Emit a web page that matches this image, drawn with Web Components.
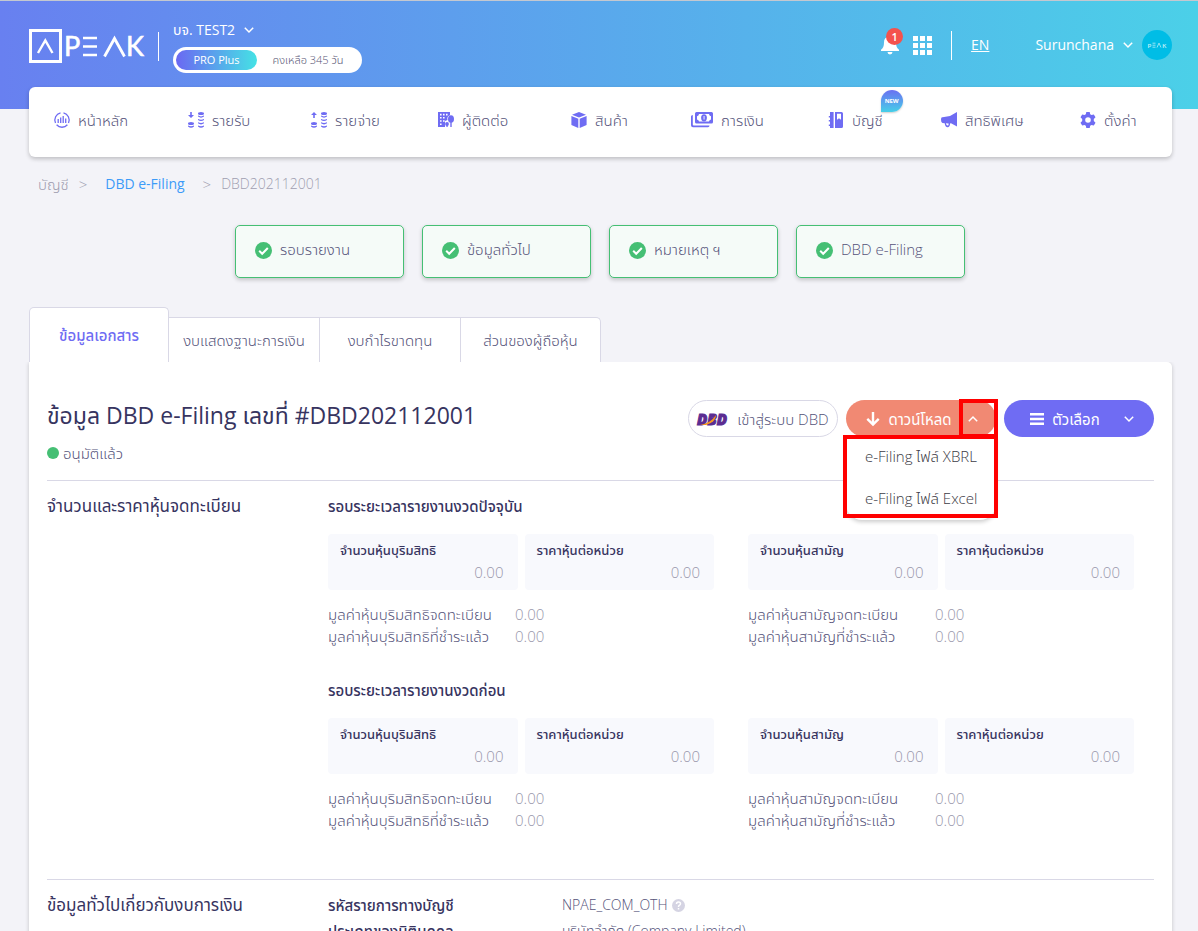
<!DOCTYPE html>
<html lang="th">
<head>
<meta charset="utf-8">
<meta name="viewport" content="width=device-width, initial-scale=1">
<title>PEAK - DBD e-Filing</title>
<style>
  :root {
    --primary: #6f6cf3;
    --text: #55537a;
    --heading: #37345f;
    --muted: #9897ab;
    --line: #d9d8e6;
    --green: #45bf74;
    --red: #ff0000;
  }

  body {
    margin: 0;
    background: #f3f3f8;
    color: var(--text);
    font: 300 15px/22px "Open Sans", "Noto Sans Thai", "Noto Sans", sans-serif;
  }
</style>
</head>
<body>
<peak-page></peak-page>

<script>
/** Inline icons by name: [viewBox, markup]. */
const icons = {
  home: ['0 0 16 16', '<g fill="none" stroke="currentColor" stroke-width="1.3"><path d="M6.5.9a7.2 7.2 0 0 0-5 10M9.5.9a7.2 7.2 0 0 1 5 10M2.6 12.8a7.2 7.2 0 0 0 10.8 0"/><path d="M4.2 7v4M6.7 5.5V11M9.2 4v7M11.7 6.5V11"/></g>'],
  income: ['0 0 16 16', '<path d="M2.2 0h1.6v3H6L3 6 0 3h2.2z"/><g><ellipse cx="3" cy="11.5" rx="3" ry="1.5"/><path d="M0 13.5q3 1.5 6 0v1q-3 2.5-6 0z"/><ellipse cx="13" cy="1.5" rx="3" ry="1.5"/><path d="M10 3.6q3 1.6 6 0v1q-3 2.2-6 0zM10 7q3 1.6 6 0v1q-3 2.2-6 0zM10 10.3q3 1.6 6 0v1q-3 2.2-6 0zM10 13.5q3 1.6 6 0v1q-3 2.5-6 0z"/></g>'],
  expense: ['0 0 16 16', '<path d="M2.2 6h1.6V3H6L3 0 0 3h2.2z"/><g><ellipse cx="3" cy="11.5" rx="3" ry="1.5"/><path d="M0 13.5q3 1.5 6 0v1q-3 2.5-6 0z"/><ellipse cx="13" cy="1.5" rx="3" ry="1.5"/><path d="M10 3.6q3 1.6 6 0v1q-3 2.2-6 0zM10 7q3 1.6 6 0v1q-3 2.2-6 0zM10 10.3q3 1.6 6 0v1q-3 2.2-6 0zM10 13.5q3 1.6 6 0v1q-3 2.5-6 0z"/></g>'],
  contact: ['0 0 16 16', '<path fill-rule="evenodd" d="M0 0h12v3.2A4 4 0 0 0 9.5 8L7 9v6H0zM2 1.8v1.6h1.6V1.8zm3 0v1.6h1.6V1.8zm3 0v1.6h1.6V1.8zM2 5v1.6h1.6V5zm3 0v1.6h1.6V5zM2 8.2v1.6h1.6V8.2zm3 0v1.6h1.6V8.2zM2 11.4V13h1.6v-1.6z"/><ellipse cx="13" cy="7" rx="3" ry="3.8"/><path d="M12.3 9h1.4v6h-1.4z"/><circle cx="9" cy="12" r="1.9"/><path d="M8.4 12h1.3v3H8.4z"/>'],
  product: ['0 0 16 16', '<path d="M8 0l7 2.8L8 5.6 1 2.8zM.4 4.1l6.9 2.7V16L.4 13zM15.6 4.1L8.7 6.8V16l6.9-3z"/>'],
  finance: ['0 0 22 16', '<path fill-rule="evenodd" d="M5.500 0h15A1.500 1.500 0 0 1 22 1.500v8.500a1.500 1.500 0 0 1-1.500 1.500h-15A1.500 1.500 0 0 1 4 10V1.500A1.500 1.500 0 0 1 5.500 0zM8 2a2.500 2.500 0 0 1-2 2.200v3.200A2.500 2.500 0 0 1 8 9.600h10a2.500 2.500 0 0 1 2-2.200V4.200A2.500 2.500 0 0 1 18 2z"/><ellipse cx="13" cy="5.800" rx="2.900" ry="3.600"/><path d="M0 4.500Q0 3 1.800 3v9.500q0 1 1 1H18.500q0 1.800-1.500 1.800H2Q0 15.300 0 13.300z"/><path d="M12.600 4h.900v3.500h-.900z" fill="#fff"/>'],
  accounting: ['0 0 16 16', '<path d="M2 0h3.600v16H2v-2H.8v-1.500H2v-3H.8V8H2V5.500H.8V4H2z"/><path fill-rule="evenodd" d="M7 0h6.500a1.500 1.500 0 0 1 1.500 1.500v13a1.500 1.500 0 0 1-1.500 1.500H7zM9 1.800v6l2-1.600 2 1.600v-6z"/>'],
  privilege: ['0 0 16 16', '<path d="M16 0v14.500l-6-3.200-1 .1c.2 1.300-.4 3.500-2 3.800-1.800.3-3-1.400-3.300-4L1.500 11Q0 10.500 0 7.700T1.500 5.300L9 4zM5 11.300c.3 1.500.9 2.300 1.700 2.200.7-.1 1-1 .9-2.100z"/>'],
  setting: ['0 0 16 16', '<path fill-rule="evenodd" d="M6.300 0h3.400l.5 2.300 1.300.8L13.800 2.400l1.700 2.900-1.700 1.700v2l1.700 1.700-1.700 2.900-2.300-.7-1.300.8L9.700 16H6.300l-.5-2.300-1.300-.8-2.300.7L.5 10.700 2.200 9V7L.5 5.300l1.700-2.900 2.300.7 1.300-.8zM8 5.200a2.800 2.800 0 1 0 0 5.600 2.800 2.800 0 0 0 0-5.600z"/>'],
  bell: ['0 0 18 20', '<path d="M9 0a1.300 1.300 0 0 1 1.300 1.400A6 6 0 0 1 15 7.500c0 4 1 5.500 3 7.300V16H0v-1.200c2-1.800 3-3.300 3-7.300a6 6 0 0 1 4.700-6.100A1.300 1.300 0 0 1 9 0zM6.500 17h5a2.500 2.500 0 0 1-5 0z"/>'],
  apps: ['0 0 19 19', '<path d="M0 0h5v5H0zM7 0h5v5H7zM14 0h5v5h-5zM0 7h5v5H0zM7 7h5v5H7zM14 7h5v5h-5zM0 14h5v5H0zM7 14h5v5H7zM14 14h5v5h-5z"/>'],
  down: ['0 0 10 6', '<path d="M.8.8L5 5 9.200.8" fill="none" stroke="currentColor" stroke-width="1.500"/>'],
  up: ['0 0 10 6', '<path d="M.8 5.200L5 1l4.200 4.200" fill="none" stroke="currentColor" stroke-width="1.500"/>'],
  arrow: ['0 0 14 14', '<path d="M7 0v12M1.300 6.800L7 12.500l5.700-5.700" fill="none" stroke="currentColor" stroke-width="2.400"/>'],
  menu: ['0 0 14 12', '<path d="M0 0h14v2.400H0zM0 4.800h14v2.400H0zM0 9.600h14V12H0z"/>'],
  check: ['0 0 17 17', '<circle cx="8.500" cy="8.500" r="8.500"/><path d="M4.200 8.800l3 3 5.600-5.800" fill="none" stroke="#fff" stroke-width="2"/>'],
  help: ['0 0 13 13', '<circle cx="6.500" cy="6.500" r="6.500"/><path d="M4.500 5q0-2 2-2t2 1.800q0 1-1.200 1.600-.8.400-.8 1.500M6.500 9v1.500" fill="none" stroke="#fff" stroke-width="1.500"/>'],
  logo: ['0 0 116 34', '<g fill="none" stroke="currentColor"><path d="M1.500 1.500h30v31h-30z" stroke-width="3"/><path d="M9 24l7.300-12.500L23.500 24" stroke-width="2.400"/><path d="M54 9h14M54 17.500h14M54 26h14" stroke-width="2.600"/><path d="M75.500 27.500L85.500 9.500l10 18" stroke-width="2.800"/></g><g font-family="Lato" font-weight="400" font-size="27" stroke="currentColor" stroke-width=".6"><text x="35" y="27">P</text><text x="97" y="27">K</text></g>'],
  avatar: ['0 0 30 30', '<circle cx="15" cy="15" r="15" fill="#00bde6"/><g fill="none" stroke="#b9edf8" stroke-width=".8"><path d="M10.500 13.200h3M10.500 15.200h3M10.500 17.200h3M15 17.500l2-4.400 2 4.400"/></g><g font-family="Lato" font-size="6" font-weight="700" fill="#b9edf8"><text x="5.500" y="17.500">P</text><text x="20.200" y="17.500">K</text></g>'],
  dbd: ['0 0 32 16', '<text x="0" y="14" font-family="Open Sans" font-weight="800" font-style="italic" font-size="15" fill="#5b2c91" stroke="#5b2c91">DBD</text><path d="M3 14Q14 12 19 4q0 7-10 10z" fill="#f7981d"/>'],
};

/** Base element that fills an open shadow root with its styles and markup. */
class BaseElement extends HTMLElement {
  connectedCallback() {
    if (this.shadowRoot) { return; }
    this.attachShadow({ mode: 'open' });
    this.shadowRoot.innerHTML = `<style>*, *::before, *::after { box-sizing: border-box; }${this.constructor.styles}</style>${this.render()}`;
  }

  attr(name) {
    return this.getAttribute(name) || '';
  }
}

class PeakIcon extends BaseElement {
  static styles = `
    :host { display: inline-flex; flex: none; width: 16px; height: 16px; }
    svg { width: 100%; height: 100%; fill: currentColor; display: block; overflow: visible; }
  `;

  render() {
    const [viewBox, markup] = icons[this.attr('name')];
    return `<svg viewBox="${viewBox}" aria-hidden="true">${markup}</svg>`;
  }
}

class PeakHeader extends BaseElement {
  static styles = `
    :host {
      display: flex; align-items: flex-start; box-sizing: border-box; height: 109px; padding: 0 26px 0 29px;
      border-top: 1px solid #c4c8d0; color: #fff; font-size: 14px; font-weight: 400;
      background: linear-gradient(90deg, #6880f0, #4bd0e8);
    }
    button { border: 0; padding: 0; background: none; color: inherit; font: inherit; cursor: pointer; display: flex; align-items: center; gap: 9px; }
    a { color: inherit; }
    .logo { width: 116px; height: 34px; margin-top: 28px; }
    .bar { width: 1px; height: 29px; background: #fff; margin: 31px 14px 0 13px; }
    .company { padding-top: 18px; }
    .chevron { width: 10px; height: 6px; }
    .plan { display: flex; align-items: center; width: 189px; height: 26px; margin-top: 6px; padding: 3px; border-radius: 13px; background: #fff; color: #585676; font-size: 11px; line-height: 20px; text-align: center; }
    .plan b { width: 81px; border-radius: 10px; background: linear-gradient(90deg, #6b68f2, #45e2e5); color: #fff; font-weight: 400; }
    .plan span { flex: 1; font-weight: 300; white-space: nowrap; }
    .tools { display: flex; align-items: center; height: 88px; margin-left: auto; }
    .tools .bar { margin: 0 19px; }
    .bell { position: relative; margin-right: 14px; }
    .bell peak-icon { width: 18px; height: 20px; }
    .bell span { position: absolute; left: 5px; top: -7px; width: 17px; height: 17px; border-radius: 9px; background: #f4524d; font-size: 11px; line-height: 17px; font-weight: 600; }
    .apps { width: 19px; height: 19px; }
    .user { margin-left: 46px; gap: 9px; }
    .avatar { width: 30px; height: 30px; }
  `;

  render() {
    return `
      <peak-icon class="logo" name="logo"></peak-icon>
      <div class="bar"></div>
      <div class="company">
        <button>บจ. TEST2 <peak-icon class="chevron" name="down"></peak-icon></button>
        <div class="plan"><b>PRO Plus</b><span>คงเหลือ 345 วัน</span></div>
      </div>
      <div class="tools">
        <button class="bell"><peak-icon name="bell"></peak-icon><span>1</span></button>
        <button aria-label="Apps"><peak-icon class="apps" name="apps"></peak-icon></button>
        <div class="bar"></div>
        <a href="#en">EN</a>
        <button class="user">Surunchana <peak-icon class="chevron" name="down"></peak-icon><peak-icon class="avatar" name="avatar"></peak-icon></button>
      </div>`;
  }
}

class PeakNav extends BaseElement {
  static styles = `
    :host {
      display: grid; grid-template-columns: 134fr 123fr 127fr 133fr 120fr 137fr 113fr 139fr 92fr;
      position: relative; height: 70px; margin: -22px 26px 0 29px; padding-left: 25px;
      border-radius: 6px; background: #fff; box-shadow: 0 2px 4px rgba(0, 0, 0, .22);
    }
  `;

  render() {
    return `
      <peak-nav-item icon="home">หน้าหลัก</peak-nav-item>
      <peak-nav-item icon="income">รายรับ</peak-nav-item>
      <peak-nav-item icon="expense">รายจ่าย</peak-nav-item>
      <peak-nav-item icon="contact">ผู้ติดต่อ</peak-nav-item>
      <peak-nav-item icon="product">สินค้า</peak-nav-item>
      <peak-nav-item icon="finance" wide>การเงิน</peak-nav-item>
      <peak-nav-item icon="accounting" badge="NEW">บัญชี</peak-nav-item>
      <peak-nav-item icon="privilege">สิทธิพิเศษ</peak-nav-item>
      <peak-nav-item icon="setting">ตั้งค่า</peak-nav-item>`;
  }
}

class PeakNavItem extends BaseElement {
  static styles = `
    :host { display: block; padding-top: 22px; }
    a { position: relative; display: inline-flex; align-items: center; gap: 8px; color: inherit; text-decoration: none; white-space: nowrap; }
    peak-icon { color: var(--primary); }
    :host([wide]) peak-icon { width: 22px; }
    .badge { position: absolute; right: -20px; top: -19px; width: 22px; height: 22px; border-radius: 11px 11px 11px 0; background: linear-gradient(#6b70f2, #45cfe8); color: #fff; font-size: 6px; line-height: 22px; font-weight: 700; text-align: center; box-shadow: 0 1px 2px rgba(0, 0, 0, .2); }
  `;

  render() {
    const badge = this.attr('badge');
    return `<a href="#${this.attr('icon')}"><peak-icon name="${this.attr('icon')}"></peak-icon><slot></slot>${badge ? `<span class="badge">${badge}</span>` : ''}</a>`;
  }
}

class PeakBreadcrumb extends BaseElement {
  static styles = `
    :host { display: flex; gap: 10px; padding: 16px 38px 0; color: #9f9eb0; }
    a { color: inherit; text-decoration: none; }
    .link { color: #3c9bf8; font-size: 14px; font-weight: 400; margin: 0 8px; }
    .code { font-size: 14px; }
  `;

  render() {
    return '<a href="#accounting">บัญชี</a><span>&gt;</span><a class="link" href="#dbd">DBD e-Filing</a><span>&gt;</span><span class="code">DBD202112001</span>';
  }
}

class PeakStep extends BaseElement {
  static styles = `
    :host { display: flex; gap: 8px; box-sizing: border-box; width: 169px; height: 53px; padding: 12px 19px; border: 1px solid var(--green); border-radius: 5px; background: #f5fbf8; box-shadow: 0 2px 4px rgba(0, 0, 0, .2); white-space: nowrap; }
    peak-icon { width: 17px; height: 17px; margin-top: 4px; color: var(--green); }
  `;

  render() {
    return '<peak-icon name="check"></peak-icon><slot></slot>';
  }
}

class PeakTabs extends BaseElement {
  static styles = `
    :host { display: flex; align-items: flex-end; margin: 29px 26px 0 29px; }
    button { width: 141px; height: 45px; padding: 0; border: 1px solid var(--line); border-width: 1px 1px 0 0; background: #fff; color: inherit; font: inherit; white-space: nowrap; }
    .wide { width: 151px; }
    .active { width: 140px; height: 55px; border-left-width: 1px; border-radius: 5px 5px 0 0; color: var(--primary); font-weight: 500; }
    button:last-child { width: 140px; border-radius: 0 5px 0 0; }
  `;

  render() {
    return `
      <button class="active">ข้อมูลเอกสาร</button>
      <button class="wide">งบแสดงฐานะการเงิน</button>
      <button>งบกำไรขาดทุน</button>
      <button>ส่วนของผู้ถือหุ้น</button>`;
  }
}

class PeakActions extends BaseElement {
  static styles = `
    :host { display: flex; gap: 8px; }
    button { display: flex; align-items: center; justify-content: center; gap: 8px; border: 0; padding: 0; background: none; color: inherit; font: inherit; font-weight: 400; white-space: nowrap; }
    .pill { width: 150px; height: 37px; border-radius: 19px; color: #fff; }
    .dbd { border: 1px solid var(--line); color: var(--text); font-weight: 300; }
    .dbd peak-icon { width: 32px; }
    .split { position: relative; display: flex; background: #f18973; }
    .main { flex: 1; padding-left: 16px; }
    .main peak-icon, .menu peak-icon { width: 14px; height: 14px; }
    .toggle { width: 40px; padding-right: 6px; }
    .toggle peak-icon, .menu .caret { width: 10px; height: 6px; }
    .toggle::after { content: ""; position: absolute; right: -2px; top: -1px; width: 39px; height: 39px; border: 4px solid var(--red); }
    .menu { padding-left: 6px; background: var(--primary); }
    .menu .caret { margin-left: 16px; }
    .list { position: absolute; left: 0; right: 0; top: 37px; height: 83px; border-radius: 0 0 16px 16px; background: #fff; box-shadow: 0 2px 4px rgba(0, 0, 0, .2); color: #3c3c46; }
    .list::after { content: ""; position: absolute; left: -3px; right: -2px; top: -2px; height: 83px; border: 4px solid var(--red); pointer-events: none; }
    .list a { display: block; padding: 8px 0 12px 19px; color: inherit; font-weight: 300; text-decoration: none; white-space: nowrap; }
  `;

  render() {
    return `
      <button class="pill dbd"><peak-icon name="dbd"></peak-icon>เข้าสู่ระบบ DBD</button>
      <div class="pill split">
        <button class="main"><peak-icon name="arrow"></peak-icon>ดาวน์โหลด</button>
        <button class="toggle" aria-label="เลือกไฟล์"><peak-icon name="up"></peak-icon></button>
        <div class="list"><a href="#xbrl">e-Filing ไฟล์ XBRL</a><a href="#excel">e-Filing ไฟล์ Excel</a></div>
      </div>
      <button class="pill menu"><peak-icon name="menu"></peak-icon>ตัวเลือก<peak-icon class="caret" name="down"></peak-icon></button>`;
  }
}

class PeakField extends BaseElement {
  static styles = `
    :host { display: block; box-sizing: border-box; height: 56px; padding: 5px 14px 0 12px; border-radius: 4px; background: #f8f9fd; }
    label { display: block; color: var(--heading); font-size: 13px; font-weight: 500; white-space: nowrap; }
    input { display: block; width: 100%; height: 22px; border: 0; padding: 0; background: none; color: var(--muted); font: inherit; text-align: right; }
  `;

  render() {
    return `<label for="value">${this.attr('label')}</label><input id="value" value="0.00">`;
  }
}

/** Registered share values of one reporting period. */
class PeakPeriod extends BaseElement {
  static styles = `
    :host { display: block; height: 184px; }
    h3 { margin: 0 0 17px; color: var(--heading); font-size: 15px; line-height: 22px; font-weight: 500; }
    .groups, .fields { display: grid; grid-template-columns: 1fr 1fr; column-gap: 34px; padding-right: 20px; }
    .fields { column-gap: 7px; padding: 0; margin-bottom: 13px; }
    dl { display: grid; grid-template-columns: 187px 1fr; margin: 0; white-space: nowrap; }
    dd { margin: 0; color: var(--muted); }
  `;

  group(kind) {
    return `
      <div>
        <div class="fields">
          <peak-field label="จำนวนหุ้น${kind}"></peak-field>
          <peak-field label="ราคาหุ้นต่อหน่วย"></peak-field>
        </div>
        <dl>
          <dt>มูลค่าหุ้น${kind}จดทะเบียน</dt><dd>0.00</dd>
          <dt>มูลค่าหุ้น${kind}ที่ชำระแล้ว</dt><dd>0.00</dd>
        </dl>
      </div>`;
  }

  render() {
    return `<h3><slot></slot></h3><div class="groups">${this.group('บุริมสิทธิ')}${this.group('สามัญ')}</div>`;
  }
}

class PeakSection extends BaseElement {
  static styles = `
    :host { display: grid; grid-template-columns: 281px 1fr; border-top: 1px solid var(--line); padding-top: 14px; }
    h2 { margin: 0; color: var(--heading); font-size: 17px; line-height: 22px; font-weight: 400; white-space: nowrap; }
  `;

  render() {
    return `<h2>${this.attr('heading')}</h2><div><slot></slot></div>`;
  }
}

class PeakInfo extends BaseElement {
  static styles = `
    :host { display: grid; grid-template-columns: 234px 1fr; height: 26px; font-size: 14px; }
    b { color: var(--heading); font-size: 15px; font-weight: 500; }
    span { display: flex; align-items: center; gap: 4px; height: 22px; }
    peak-icon { width: 13px; height: 13px; color: #d5d4e3; }
  `;

  render() {
    return `<b>${this.attr('label')}</b><span><slot></slot>${this.hasAttribute('help') ? '<peak-icon name="help"></peak-icon>' : ''}</span>`;
  }
}

class PeakPage extends BaseElement {
  static styles = `
    :host { display: block; }
    .steps { display: flex; justify-content: center; gap: 18px; margin-top: 30px; padding-left: 2px; }
    main { margin: 0 26px 0 29px; padding: 38px 18px; border-radius: 0 5px 0 0; background: #fff; box-shadow: 0 1px 4px rgba(0, 0, 0, .2); clip-path: inset(0 -6px -6px -6px); }
    .top { display: flex; justify-content: space-between; height: 37px; }
    h1 { margin: 0; color: var(--heading); font-size: 23px; line-height: 30px; font-weight: 400; white-space: nowrap; }
    .status { display: flex; align-items: center; gap: 4px; height: 22px; margin: 5px 0 16px; }
    .status::before { content: ""; width: 12px; height: 12px; border-radius: 6px; background: var(--green); }
    .top peak-actions { position: relative; z-index: 1; }
    .shares { box-sizing: border-box; height: 399px; }
  `;

  render() {
    return `
      <peak-header></peak-header>
      <peak-nav></peak-nav>
      <peak-breadcrumb></peak-breadcrumb>
      <div class="steps">
        <peak-step>รอบรายงาน</peak-step>
        <peak-step>ข้อมูลทั่วไป</peak-step>
        <peak-step>หมายเหตุ ฯ</peak-step>
        <peak-step>DBD e-Filing</peak-step>
      </div>
      <peak-tabs></peak-tabs>
      <main>
        <div class="top">
          <h1>ข้อมูล DBD e-Filing เลขที่ #DBD202112001</h1>
          <peak-actions></peak-actions>
        </div>
        <div class="status">อนุมัติแล้ว</div>
        <peak-section class="shares" heading="จำนวนและราคาหุ้นจดทะเบียน">
          <peak-period>รอบระยะเวลารายงานงวดปัจจุบัน</peak-period>
          <peak-period>รอบระยะเวลารายงานงวดก่อน</peak-period>
        </peak-section>
        <peak-section heading="ข้อมูลทั่วไปเกี่ยวกับงบการเงิน">
          <peak-info label="รหัสรายการทางบัญชี" help>NPAE_COM_OTH</peak-info>
          <peak-info label="ประเภทของนิติบุคคล">บริษัทจำกัด (Company Limited)</peak-info>
        </peak-section>
      </main>`;
  }
}

customElements.define('peak-icon', PeakIcon);
customElements.define('peak-header', PeakHeader);
customElements.define('peak-nav-item', PeakNavItem);
customElements.define('peak-nav', PeakNav);
customElements.define('peak-breadcrumb', PeakBreadcrumb);
customElements.define('peak-step', PeakStep);
customElements.define('peak-tabs', PeakTabs);
customElements.define('peak-actions', PeakActions);
customElements.define('peak-field', PeakField);
customElements.define('peak-period', PeakPeriod);
customElements.define('peak-section', PeakSection);
customElements.define('peak-info', PeakInfo);
customElements.define('peak-page', PeakPage);
</script>
</body>
</html>
